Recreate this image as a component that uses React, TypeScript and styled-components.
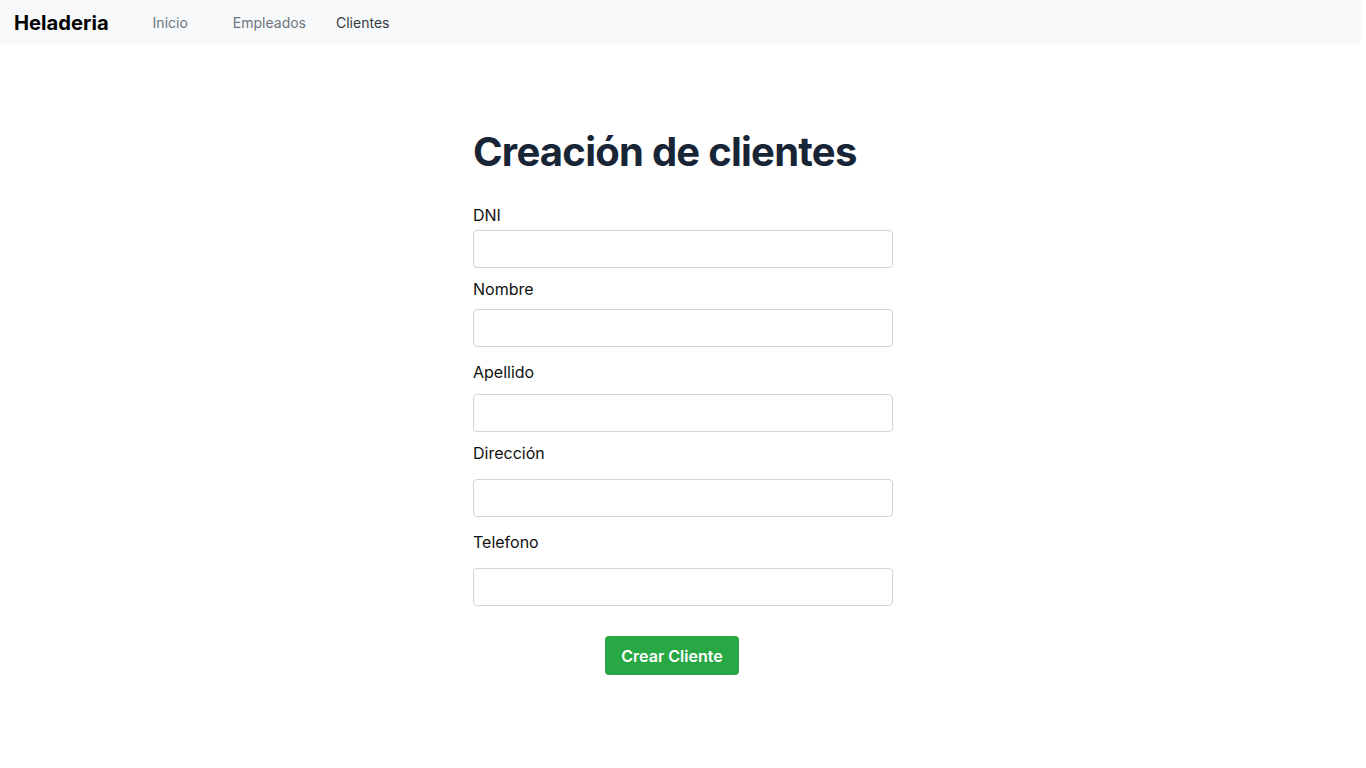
import React from "react";
import styled, { createGlobalStyle } from "styled-components";

const Global = createGlobalStyle`
  html, body { margin: 0; padding: 0; background: #fff; }
  body { font-family: Inter, "Noto Sans", sans-serif; color: #212529; }
  * { box-sizing: border-box; }
`;

const Nav = styled.nav`
  display: flex;
  align-items: center;
  height: 44px;
  width: 1362px;
  background: #f8f9fa;
  border-radius: 0 6px 6px 0;
  padding: 0 14px;
`;

const Brand = styled.a`
  font-size: 20.2px;
  font-weight: 700;
  color: #000;
  text-decoration: none;
  margin-right: 44px;
`;

const NavLink = styled.a<{ $active?: boolean; $gap: number }>`
  font-size: 14px;
  color: ${(p) => (p.$active ? "#343a40" : "#6c757d")};
  text-decoration: none;
  margin-right: ${(p) => p.$gap}px;
`;

const Main = styled.main`
  display: flex;
  justify-content: center;
  padding-top: 80px;
`;

const FormBox = styled.form`
  width: 420px;
  display: flex;
  flex-direction: column;
`;

const Title = styled.h1`
  margin: 0 0 23px;
  font-size: 40px;
  line-height: 56px;
  font-weight: 700;
  color: #172536;
  letter-spacing: -0.75px;
`;

const Field = styled.div<{ $top: number }>`
  display: flex;
  flex-direction: column;
  margin-top: ${(p) => p.$top}px;
`;

const Label = styled.label<{ $gap: number }>`
  font-size: 16px;
  line-height: 24px;
  color: #111;
  margin-bottom: ${(p) => p.$gap}px;
`;

const Input = styled.input`
  height: 38px;
  width: 100%;
  border: 1px solid #ced4da;
  border-radius: 4px;
  padding: 6px 12px;
  font-size: 16px;
  font-family: inherit;
  background: #fff;
`;

const ButtonRow = styled.div`
  display: flex;
  justify-content: center;
  padding-right: 22px;
  margin-top: 30px;
`;

const Button = styled.button`
  height: 39px;
  padding: 0 16px;
  border: none;
  border-radius: 4px;
  background: #28a745;
  color: #fff;
  font-family: inherit;
  font-size: 16px;
  font-weight: 600;
`;

const fields = [
  { label: "DNI", top: 0, gap: 3 },
  { label: "Nombre", top: 9, gap: 8 },
  { label: "Apellido", top: 13, gap: 10 },
  { label: "Dirección", top: 9, gap: 14 },
  { label: "Telefono", top: 13, gap: 14 },
];

export default function App() {
  return (
    <>
      <Global />
      <Nav>
        <Brand href="#">Heladeria</Brand>
        <NavLink href="#" $gap={45}>Inicio</NavLink>
        <NavLink href="#" $gap={30}>Empleados</NavLink>
        <NavLink href="#" $gap={0} $active>Clientes</NavLink>
      </Nav>
      <Main>
        <FormBox onSubmit={(e) => e.preventDefault()}>
          <Title>Creación de clientes</Title>
          {fields.map((f) => (
            <Field key={f.label} $top={f.top}>
              <Label $gap={f.gap}>{f.label}</Label>
              <Input type="text" />
            </Field>
          ))}
          <ButtonRow>
            <Button type="submit">Crear Cliente</Button>
          </ButtonRow>
        </FormBox>
      </Main>
    </>
  );
}
